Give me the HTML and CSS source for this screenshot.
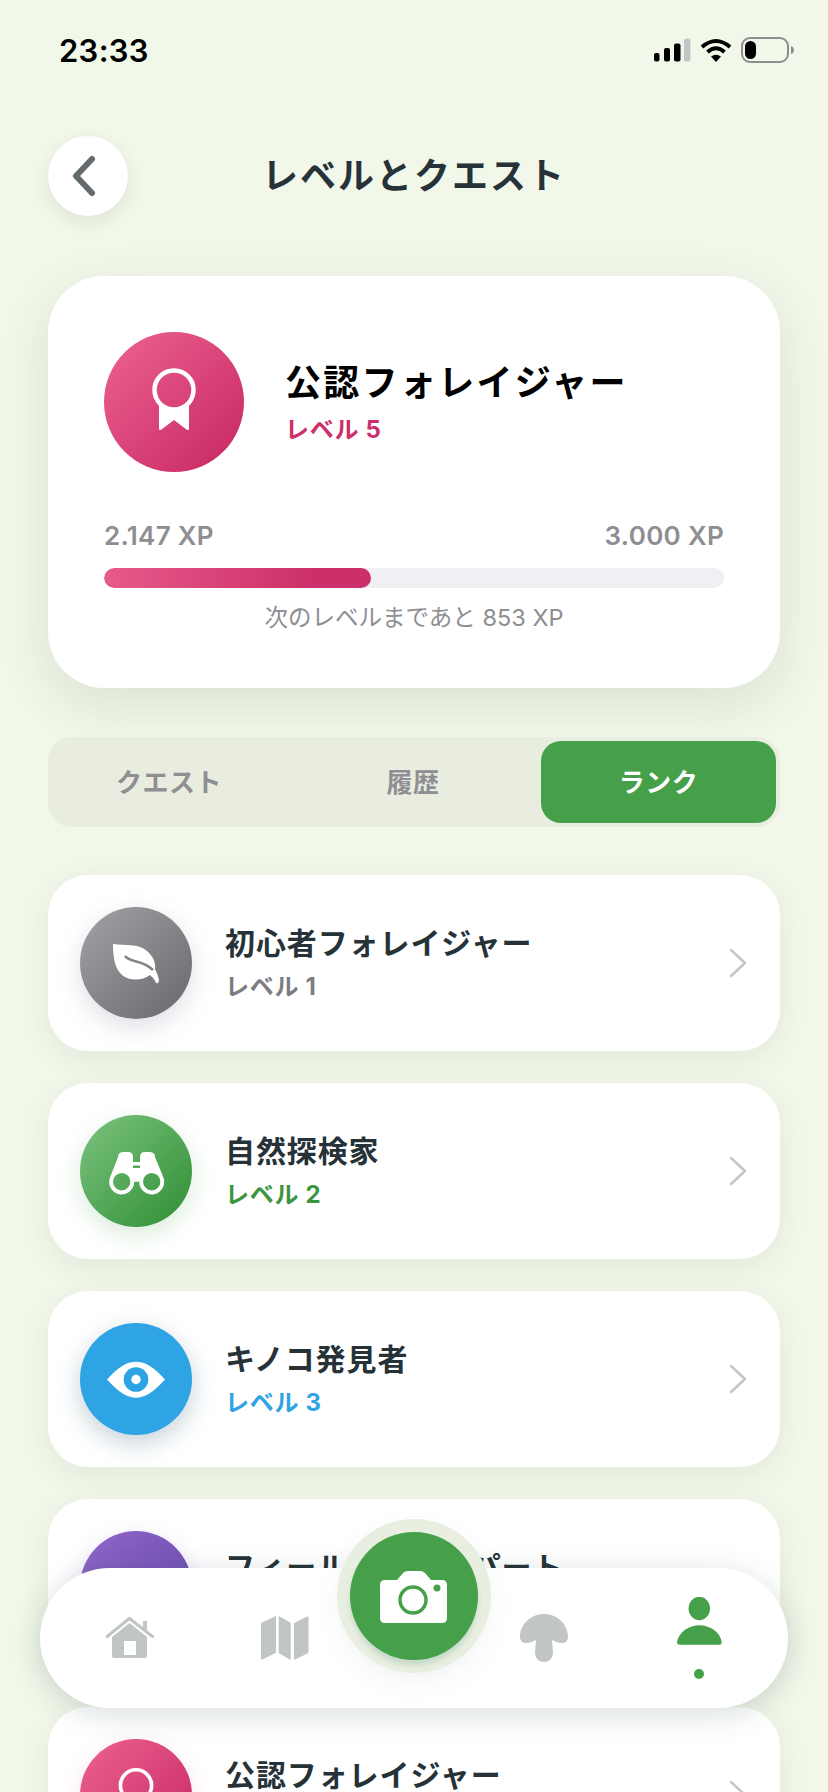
FILE: index.html
```html
<!DOCTYPE html>
<html lang="ja">
<head>
  <meta charset="UTF-8">
  <title>レベルとクエスト</title>
  <meta name="viewport" content="width=device-width, initial-scale=1.0">
  <link rel="stylesheet" href="styles.css">
</head>
<body>
  <div class="status-bar">
    <span class="time">23:33</span>
    <div class="status-icons">
      <svg width="37" height="24" viewBox="0 0 37 24">
        <rect x="0" y="15" width="5.5" height="8.5" rx="2" fill="#000"/>
        <rect x="10" y="10" width="6" height="13.5" rx="2" fill="#000"/>
        <rect x="20" y="5.5" width="6.5" height="18" rx="2" fill="#000"/>
        <rect x="30" y="0.5" width="6.5" height="23" rx="2" fill="#c1c5c6"/>
      </svg>
      <svg width="32" height="24" viewBox="0 0 32 24">
        <path d="M2 9Q16 -3 30 9" fill="none" stroke="#000" stroke-width="4"/>
        <path d="M7.5 14Q16 6.5 24.500 14" fill="none" stroke="#000" stroke-width="4"/>
        <path d="M11 18.500Q16 15 21 18.500L16 24Z" fill="#000"/>
      </svg>
      <svg width="53" height="26" viewBox="0 0 53 26">
        <rect x="1" y="1" width="46" height="24" rx="8" fill="none" stroke="#8e8e8e" stroke-width="2"/>
        <rect x="4" y="4" width="11" height="18" rx="5.500" fill="#000"/>
        <path d="M50 9Q53 10 53 13T50 17Z" fill="#8e8e8e"/>
      </svg>
    </div>
  </div>

  <div class="page-header">
    <div class="back-btn">
      <svg width="26" height="42" viewBox="0 0 26 42">
        <path d="M21 4L5 21L21 38" fill="none" stroke="#636b6e" stroke-width="6" stroke-linecap="round" stroke-linejoin="round"/>
      </svg>
    </div>
    <h1 class="page-title">レベルとクエスト</h1>
  </div>

  <section class="rank-card">
    <div class="rank-top">
      <div class="rank-badge pink">
        <svg width="60" height="80" viewBox="0 0 60 80">
          <circle cx="30" cy="28" r="19.500" fill="none" stroke="#fff" stroke-width="4.500"/>
          <path d="M15 42V66.500Q15 69 17.500 67.500L30 58L42.500 67.500Q45 69 45 66.500V42A21.500 21.500 0 0 1 15 42Z" fill="#fff"/>
        </svg>
      </div>
      <div class="rank-info">
        <div class="rank-name">公認フォレイジャー</div>
        <div class="rank-level">レベル 5</div>
      </div>
    </div>
    <div class="xp-row">
      <span>2.147 XP</span>
      <span>3.000 XP</span>
    </div>
    <div class="xp-track">
      <div class="xp-fill" style="width: 43%"></div>
    </div>
    <div class="xp-note">次のレベルまであと 853 XP</div>
  </section>

  <div class="tabs">
    <div class="tab">クエスト</div>
    <div class="tab">履歴</div>
    <div class="tab active">ランク</div>
  </div>

  <div class="level-list">
    <div class="level-row">
      <div class="level-icon grey">
        <svg width="112" height="112" viewBox="0 0 112 112">
          <path d="M33 37C45 39 58 36 67 44C74 50 76 57 75 62C77 66 79 71 79 74Q78 77 76 76C74 71 72 70 70 68C62 74 49 74 42 68C34 61 33 48 33 37Z" fill="#fff"/>
          <path d="M45 49C50 56 62 52 73 63" fill="none" stroke="#838487" stroke-width="2.500"/>
        </svg>
      </div>
      <div class="level-text">
        <div class="level-name">初心者フォレイジャー</div>
        <div class="level-num txt-grey">レベル 1</div>
      </div>
      <svg class="chevron" width="20" height="32" viewBox="0 0 20 32">
        <path d="M3 3L17 16L3 29" fill="none" stroke="#c3c7c9" stroke-width="2.500" stroke-linecap="round" stroke-linejoin="round"/>
      </svg>
    </div>

    <div class="level-row">
      <div class="level-icon green">
        <svg width="112" height="112" viewBox="0 0 112 112">
          <path fill-rule="evenodd" fill="#fff" d="M38 42Q38 37 44 37H48Q53 37 53 42V47H60V42Q60 37 65 37H69Q75 37 75 42L83.200 62A12.500 12.500 0 1 1 59.200 66.700H54.200A12.500 12.500 0 1 1 30.200 62ZM33 66.700a8.700 8.700 0 1 0 17.400 0a8.700 8.700 0 1 0 -17.400 0ZM63 66.700a8.700 8.700 0 1 0 17.400 0a8.700 8.700 0 1 0 -17.400 0ZM53 50.500h7v2.500h-7Z"/>
        </svg>
      </div>
      <div class="level-text">
        <div class="level-name">自然探検家</div>
        <div class="level-num txt-green">レベル 2</div>
      </div>
      <svg class="chevron" width="20" height="32" viewBox="0 0 20 32">
        <path d="M3 3L17 16L3 29" fill="none" stroke="#c3c7c9" stroke-width="2.500" stroke-linecap="round" stroke-linejoin="round"/>
      </svg>
    </div>

    <div class="level-row">
      <div class="level-icon blue">
        <svg width="112" height="112" viewBox="0 0 112 112">
          <path d="M27 56.500C38 44 47 38.700 56 38.700S74 44 85 56.500C74 69 65 74.700 56 74.700S38 69 27 56.500Z" fill="#fff"/>
          <circle cx="56" cy="56.500" r="12.300" fill="#2ea4e4"/>
          <circle cx="56" cy="56.500" r="4.700" fill="#fff"/>
        </svg>
      </div>
      <div class="level-text">
        <div class="level-name">キノコ発見者</div>
        <div class="level-num txt-blue">レベル 3</div>
      </div>
      <svg class="chevron" width="20" height="32" viewBox="0 0 20 32">
        <path d="M3 3L17 16L3 29" fill="none" stroke="#c3c7c9" stroke-width="2.500" stroke-linecap="round" stroke-linejoin="round"/>
      </svg>
    </div>

    <div class="level-row">
      <div class="level-icon purple"></div>
      <div class="level-text">
        <div class="level-name">フィールドエキスパート</div>
        <div class="level-num txt-purple">レベル 4</div>
      </div>
      <svg class="chevron" width="20" height="32" viewBox="0 0 20 32">
        <path d="M3 3L17 16L3 29" fill="none" stroke="#c3c7c9" stroke-width="2.500" stroke-linecap="round" stroke-linejoin="round"/>
      </svg>
    </div>

    <div class="level-row">
      <div class="level-icon pink">
        <svg width="48" height="64" viewBox="0 0 60 80">
          <circle cx="30" cy="28" r="19.500" fill="none" stroke="#fff" stroke-width="4.500"/>
          <path d="M15 42V66.500Q15 69 17.500 67.500L30 58L42.500 67.500Q45 69 45 66.500V42A21.500 21.500 0 0 1 15 42Z" fill="#fff"/>
        </svg>
      </div>
      <div class="level-text">
        <div class="level-name">公認フォレイジャー</div>
        <div class="level-num txt-pink">レベル 5</div>
      </div>
      <svg class="chevron" width="20" height="32" viewBox="0 0 20 32">
        <path d="M3 3L17 16L3 29" fill="none" stroke="#c3c7c9" stroke-width="2.500" stroke-linecap="round" stroke-linejoin="round"/>
      </svg>
    </div>
  </div>

  <nav class="tab-bar">
    <div class="nav-item nav-home">
      <svg width="48" height="44" viewBox="0 0 48 44">
        <path fill-rule="evenodd" fill="#c1c5c6" d="M23.500 7L41 21V40Q41 42 39 42H8Q6 42 6 40V21ZM18 25V39H30V25Z"/>
        <path d="M1 20.500L23.500 2.500L46.500 20.500" fill="none" stroke="#c1c5c6" stroke-width="3" stroke-linecap="round"/>
        <rect x="37" y="5" width="4" height="9" fill="#c1c5c6"/>
      </svg>
    </div>
    <div class="nav-item nav-map">
      <svg width="48" height="44" viewBox="0 0 48 44">
        <path d="M0 8Q0 7 1 6.500L15 0V36.700L1.500 43.500Q0 44 0 42.500Z" fill="#c1c5c6"/>
        <path d="M17.700 0L29.700 6.700V44L17.700 37Z" fill="#c1c5c6"/>
        <path d="M33 7.300L46 .5Q47.500 0 47.500 1.500V36Q47.500 37 46.500 37.500L33 44Z" fill="#c1c5c6"/>
      </svg>
    </div>
    <div class="nav-spacer"></div>
    <div class="nav-item nav-mushroom">
      <svg width="48" height="48" viewBox="0 0 48 48">
        <path d="M24 0C11 0 0 10 0 23C0 27 3 29 6 29C10 29 13 27 16 26L15 39C15 44 19 48 24 48C29 48 33 44 33 39L32 26C35 27 38 29 42 29C45 29 48 27 48 23C48 10 37 0 24 0Z" fill="#c1c5c6"/>
      </svg>
    </div>
    <div class="nav-item nav-profile">
      <svg width="45" height="48" viewBox="0 0 45 48">
        <ellipse cx="22.300" cy="11.500" rx="10.700" ry="11.700" fill="#46a049"/>
        <path d="M0 45C2 35 12 28.300 22.300 28.300C33 28.300 43 35 44.700 45Q45 47.700 42 47.700H3Q0 47.700 0 45Z" fill="#46a049"/>
      </svg>
      <span class="nav-dot"></span>
    </div>
    <div class="camera-btn">
      <svg width="128" height="128" viewBox="0 0 128 128">
        <path d="M35 48H47L53 41Q55 39 58 39H70Q73 39 75 41L81 48H92Q97 48 97 53V86Q97 91 92 91H35Q30 91 30 86V53Q30 48 35 48Z" fill="#fff"/>
        <circle cx="63" cy="68" r="13" fill="#fff" stroke="#46a049" stroke-width="3.500"/>
        <circle cx="87" cy="56" r="3.500" fill="#46a049"/>
      </svg>
    </div>
  </nav>
</body>
</html>
```

FILE: styles.css
```css
html, body { margin: 0; padding: 0; }
body {
  width: 828px;
  height: 1792px;
  overflow: hidden;
  position: relative;
  background: #f1f7e9;
  font-family: Inter, "Noto Sans CJK JP", sans-serif;
  color: #263238;
}

.status-bar { height: 100px; padding: 0 34px 0 59px; display: flex; align-items: center; justify-content: space-between; }
.time { font-size: 31px; font-weight: 600; color: #000; letter-spacing: .3px; }
.status-icons { display: flex; align-items: center; gap: 9px; }

.page-header { position: relative; margin: 36px 48px 0; height: 80px; display: flex; align-items: center; justify-content: center; }
.back-btn { position: absolute; left: 0; top: 0; width: 80px; height: 80px; border-radius: 50%; background: #fff; display: flex; align-items: center; justify-content: center; box-shadow: 0 6px 18px rgba(60, 70, 50, .1); }
.back-btn svg { margin-left: -8px; }
.page-title { margin: 0; font-size: 36px; font-weight: 700; letter-spacing: 2px; line-height: 80px; }

.rank-card { margin: 60px 48px 0; height: 412px; box-sizing: border-box; padding: 56px 56px 0; background: #fff; border-radius: 56px; box-shadow: 0 16px 52px rgba(60, 80, 50, .12); }
.rank-top { display: flex; align-items: flex-start; gap: 41px; }
.rank-badge { width: 140px; height: 140px; border-radius: 50%; display: flex; align-items: center; justify-content: center; }
.rank-badge svg { margin-top: -1px; }
.rank-info { margin-top: 27px; }
.rank-name { font-size: 36px; line-height: 48px; font-weight: 700; letter-spacing: 2.3px; color: #000; }
.rank-level { margin-top: 7px; font-size: 24px; line-height: 32px; font-weight: 700; color: #cc2f69; letter-spacing: .7px; }

.xp-row { margin-top: 48px; display: flex; justify-content: space-between; font-size: 26px; line-height: 32px; font-weight: 600; color: #8e8e93; letter-spacing: .3px; }
.xp-track { margin-top: 16px; height: 20px; border-radius: 10px; background: #eff0f3; overflow: hidden; }
.xp-fill { height: 100%; border-radius: 10px; background: linear-gradient(90deg, #e75a8b, #cc2f69 80%); }
.xp-note { margin-top: 14px; text-align: center; font-size: 23.5px; line-height: 32px; color: #8e8e93; }

.tabs { margin: 49px 48px 0; height: 90px; box-sizing: border-box; padding: 4px; display: flex; gap: 10px; border-radius: 24px; background: #e8eddf; }
.tab { width: 234px; padding-bottom: 4px; box-sizing: border-box; display: flex; align-items: center; justify-content: center; border-radius: 20px; font-size: 26px; font-weight: 700; color: #8e8e93; letter-spacing: .5px; }
.tab.active { margin-left: 1px; width: 235px; background: #46a049; color: #fff; }

.level-list { margin: 48px 48px 0; display: flex; flex-direction: column; gap: 32px; }
.level-row { flex: none; height: 176px; box-sizing: border-box; padding: 0 32px; display: flex; align-items: center; background: #fff; border-radius: 40px; box-shadow: 0 8px 30px rgba(60, 80, 50, .08); }
.level-icon { flex: none; width: 112px; height: 112px; border-radius: 50%; display: flex; align-items: center; justify-content: center; }
.level-text { flex: 1; margin-left: 33px; }
.level-name { font-size: 30px; line-height: 40px; font-weight: 700; letter-spacing: .9px; }
.level-num { margin-top: 8px; font-size: 24px; line-height: 32px; font-weight: 700; letter-spacing: .7px; }

.pink { background: linear-gradient(135deg, #e75a8b 15%, #cc2f69 85%); }
.level-icon.pink { box-shadow: 0 8px 24px rgba(204, 47, 105, .14); }
.grey { background: linear-gradient(135deg, #9a9a9e 15%, #6f7174 85%); box-shadow: 0 8px 24px rgba(100, 110, 130, .22); }
.green { background: linear-gradient(135deg, #71bb74 15%, #3a963e 85%); box-shadow: 0 8px 24px rgba(70, 160, 73, .2); }
.blue { background: #2ea4e4; box-shadow: 0 8px 24px rgba(40, 90, 120, .28); }
.purple { background: linear-gradient(135deg, #8a63c4 15%, #6a4aae 85%); box-shadow: 0 8px 24px rgba(106, 74, 174, .2); }
.txt-grey { color: #7b7d80; }
.txt-green { color: #3b963f; }
.txt-blue { color: #2ea4e4; }
.txt-purple { color: #6a4aae; }
.txt-pink { color: #cc2f69; }

.tab-bar { position: absolute; left: 40px; top: 1568px; width: 748px; height: 140px; box-sizing: border-box; padding: 0 66px; display: flex; align-items: center; background: #fff; border-radius: 70px; box-shadow: 0 6px 30px rgba(40, 70, 70, .18); }
.nav-item { flex: none; width: 48px; display: flex; flex-direction: column; align-items: center; }
.nav-map { margin-left: 107px; }
.nav-spacer { flex: none; width: 211px; }
.nav-profile { margin-left: 107px; gap: 24px; }
.nav-dot { width: 10px; height: 10px; border-radius: 50%; background: #46a049; }
.camera-btn { position: absolute; left: 310px; top: -36px; width: 128px; height: 128px; border-radius: 50%; background: #46a049; box-shadow: 0 5px 5px rgba(110, 160, 150, .28), 0 0 0 13px #e8efe0, 0 10px 36px rgba(60, 100, 80, .14); }
.camera-btn svg { display: block; }
```
